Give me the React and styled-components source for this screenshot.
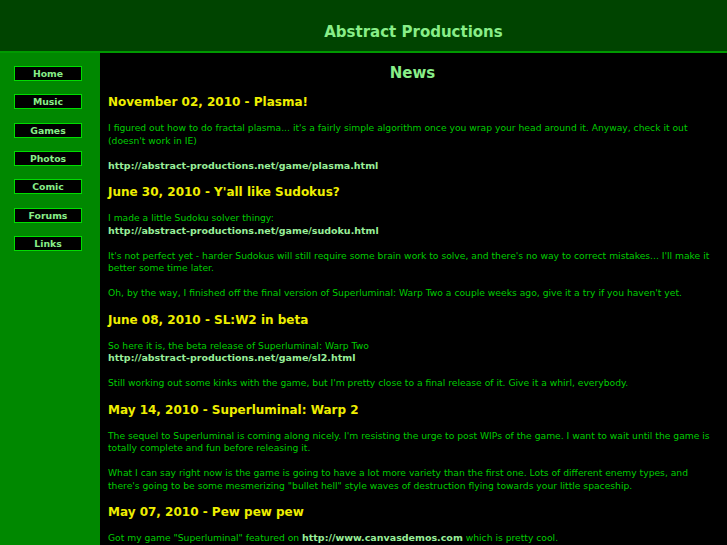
import React from 'react';
import styled, { createGlobalStyle } from 'styled-components';

const GlobalStyle = createGlobalStyle`
    html, body {
        margin: 0;
        padding: 0;
        background: #000;
        font-family: "DejaVu Sans", Verdana, sans-serif;
    }
`;

const navItems = ['Home', 'Music', 'Games', 'Photos', 'Comic', 'Forums', 'Links'];

const App = () => {
    return (
        <Page>
            <GlobalStyle />
            <Header>
                <Title>Abstract Productions</Title>
            </Header>
            <Body>
                <Sidebar>
                    {navItems.map((item) => (
                        <NavButton key={item} href="#">{item}</NavButton>
                    ))}
                </Sidebar>
                <Main>
                    <PageTitle>News</PageTitle>

                    <PostTitle>November 02, 2010 - Plasma!</PostTitle>
                    <PostText>
                        I figured out how to do fractal plasma... it's a fairly simple algorithm once you wrap your head around it. Anyway, check it out (doesn't work in IE)
                        <br /><br />
                        <Link href="#">http://abstract-productions.net/game/plasma.html</Link>
                    </PostText>

                    <PostTitle>June 30, 2010 - Y'all like Sudokus?</PostTitle>
                    <PostText>
                        I made a little Sudoku solver thingy:
                        <br />
                        <Link href="#">http://abstract-productions.net/game/sudoku.html</Link>
                        <br /><br />
                        It's not perfect yet - harder Sudokus will still require some brain work to solve, and there's no way to correct mistakes... I'll make it better some time later.
                        <br /><br />
                        Oh, by the way, I finished off the final version of Superluminal: Warp Two a couple weeks ago, give it a try if you haven't yet.
                    </PostText>

                    <PostTitle>June 08, 2010 - SL:W2 in beta</PostTitle>
                    <PostText>
                        So here it is, the beta release of Superluminal: Warp Two
                        <br />
                        <Link href="#">http://abstract-productions.net/game/sl2.html</Link>
                        <br /><br />
                        Still working out some kinks with the game, but I'm pretty close to a final release of it. Give it a whirl, everybody.
                    </PostText>

                    <PostTitle>May 14, 2010 - Superluminal: Warp 2</PostTitle>
                    <PostText>
                        The sequel to Superluminal is coming along nicely. I'm resisting the urge to post WIPs of the game. I want to wait until the game is totally complete and fun before releasing it.
                        <br /><br />
                        What I can say right now is the game is going to have a lot more variety than the first one. Lots of different enemy types, and there's going to be some mesmerizing "bullet hell" style waves of destruction flying towards your little spaceship.
                    </PostText>

                    <PostTitle>May 07, 2010 - Pew pew pew</PostTitle>
                    <PostText>
                        Got my game "Superluminal" featured on <Link href="#">http://www.canvasdemos.com</Link> which is pretty cool.
                    </PostText>
                </Main>
            </Body>
        </Page>
    );
};

export default App;

// Styled Components
const Page = styled.div`
    min-height: 100vh;
    display: flex;
    flex-direction: column;
    background: #000;
`;

const Header = styled.header`
    height: 51px;
    padding-left: 100px;
    display: flex;
    align-items: center;
    justify-content: center;
    background-color: #004400;
    border-bottom: 2px solid #009900;
`;

const Title = styled.h1`
    margin: 12px 0 0;
    font-size: 15px;
    font-weight: bold;
    color: #88ee88;
`;

const Body = styled.div`
    flex: 1;
    display: flex;
`;

const Sidebar = styled.nav`
    width: 100px;
    flex-shrink: 0;
    box-sizing: border-box;
    padding: 13px 0 0 14px;
    display: flex;
    flex-direction: column;
    gap: 13.33px;
    background-color: #008800;
`;

const NavButton = styled.a`
    width: 66px;
    height: 13px;
    display: flex;
    align-items: center;
    justify-content: center;
    background: #000;
    border: 1px solid #00dd00;
    color: #88ee88;
    font-size: 9.3px;
    font-weight: bold;
    text-decoration: none;
`;

const Main = styled.main`
    flex: 1;
    padding: 12px 10px 0 8px;
    background: #000;
`;

const PageTitle = styled.h2`
    margin: 0 0 13px;
    text-align: center;
    font-size: 15px;
    line-height: 17px;
    color: #88ee88;
`;

const PostTitle = styled.h3`
    margin: 13px 0 12px;
    font-size: 12px;
    line-height: 15px;
    color: #eeee00;
`;

const PostText = styled.div`
    font-size: 9.2px;
    line-height: 12.5px;
    color: #00cc00;
`;

const Link = styled.a`
    color: #99ee99;
    font-size: 9.5px;
    font-weight: bold;
    text-decoration: none;
`;
